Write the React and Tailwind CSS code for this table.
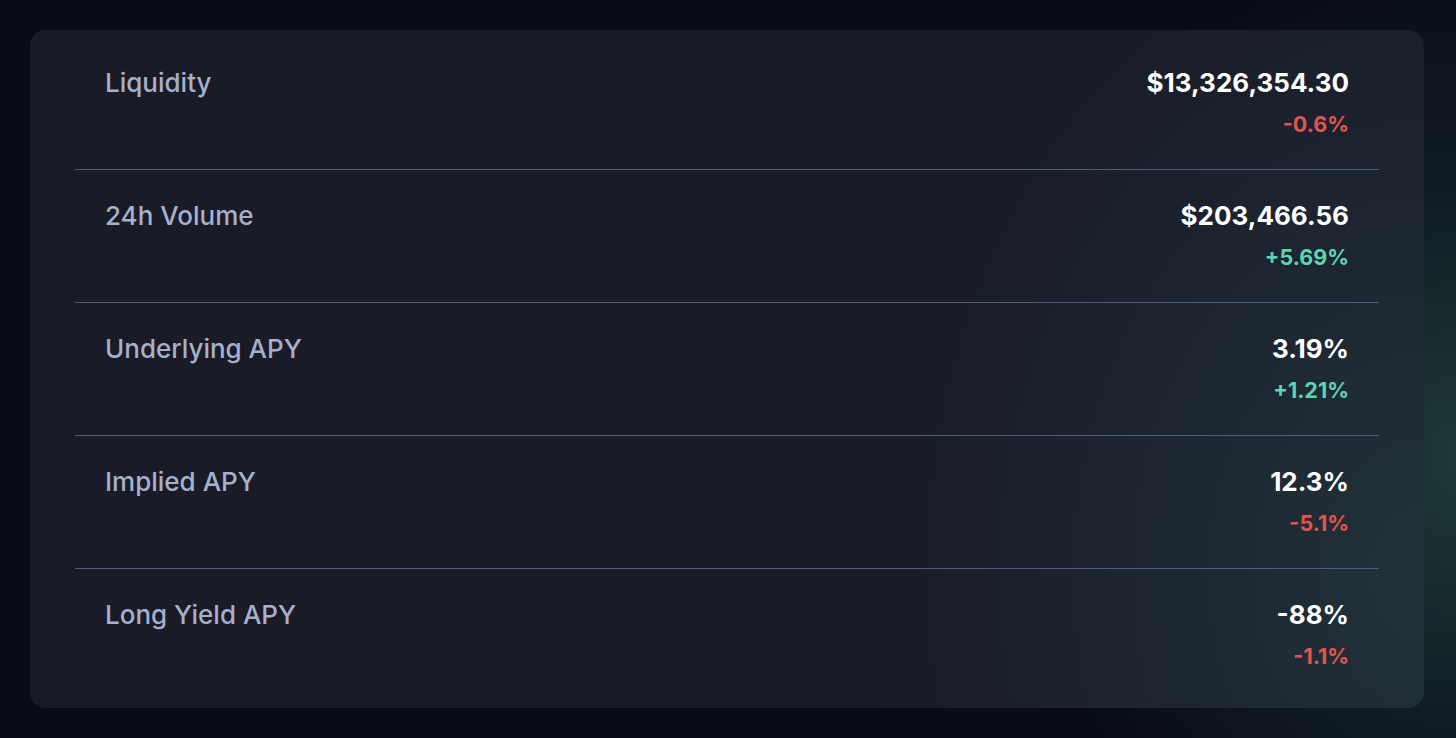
import React from "react";

// Pool stats rows
const stats = [
  { label: "Liquidity", value: "$13,326,354.30", change: "-0.6%" },
  { label: "24h Volume", value: "$203,466.56", change: "+5.69%" },
  { label: "Underlying APY", value: "3.19%", change: "+1.21%" },
  { label: "Implied APY", value: "12.3%", change: "-5.1%" },
  { label: "Long Yield APY", value: "-88%", change: "-1.1%" },
];

const StatRow = ({ label, value, change, last }) => {
  const up = change.startsWith("+");
  return (
    <div
      className={`flex items-start justify-between px-[30px] pt-[30px] pb-[31px] ${
        last ? "" : "border-b border-[#4f5d7c]"
      }`}
    >
      <p className="text-[26px] leading-8 font-medium text-[#a6b0cc]">{label}</p>
      <div className="flex flex-col items-end gap-[11px]">
        <p className="text-[26px] leading-8 font-bold text-white">{value}</p>
        <p
          className={`text-[21.5px] leading-7 font-bold ${
            up ? "text-[#5fd4b4]" : "text-[#e0554d]"
          }`}
        >
          {change}
        </p>
      </div>
    </div>
  );
};

const App = () => {
  return (
    <div className="w-[1456px] h-[738px] p-[30px] pr-[32px] bg-[#090c17] bg-[radial-gradient(ellipse_420px_520px_at_100%_62%,#1e3a3a_0%,#0f1a22_55%,#090c17_100%)] font-['Inter','Liberation_Sans',sans-serif]">
      <div className="h-full rounded-2xl bg-[#191b26] bg-[radial-gradient(ellipse_560px_720px_at_100%_80%,#22323a_0%,#1c2631_45%,#191b26_100%)] px-[45px] py-[7px]">
        {stats.map((s, i) => (
          <StatRow key={s.label} {...s} last={i === stats.length - 1} />
        ))}
      </div>
    </div>
  );
};

export default App;
